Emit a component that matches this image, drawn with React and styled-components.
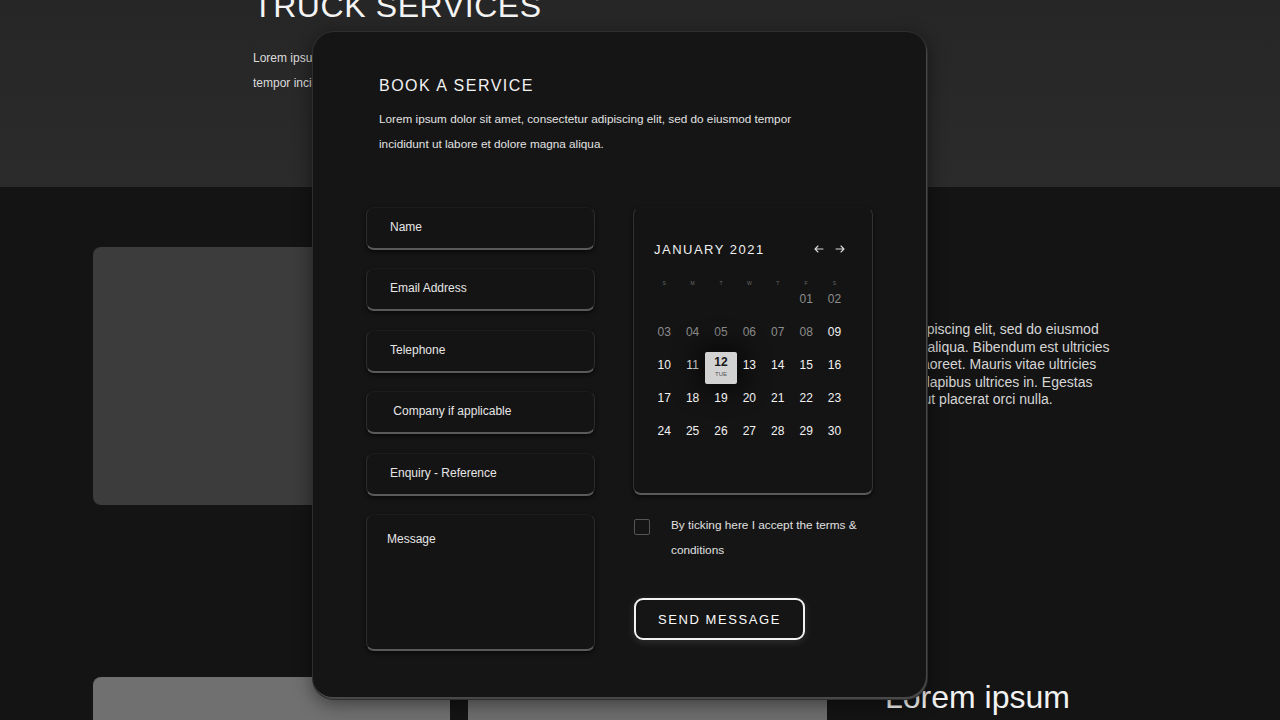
import React from "react"
import styled, { createGlobalStyle } from "styled-components"

const GlobalStyle = createGlobalStyle`
  html, body {
    margin: 0;
    padding: 0;
    background: #141414;
    font-family: "Liberation Sans", Arial, sans-serif;
    overflow: hidden;
  }
  * {
    box-sizing: border-box;
  }
`

const weekdays = ["S", "M", "T", "W", "T", "F", "S"]
const fields = ["Name", "Email Address", "Telephone", " Company if applicable", "Enquiry - Reference"]
const selected = 12

function Arrow({ flip }) {
  return (
    <svg width="10" height="8" viewBox="0 0 10 8" style={{ transform: flip ? "scaleX(-1)" : "none" }}>
      <path d="M9 4H1.2M4 1L1 4l3 3" fill="none" stroke="#d8d8d8" strokeWidth="1.1" strokeLinecap="round" strokeLinejoin="round" />
    </svg>
  )
}

function Calendar() {
  const cells = []
  for (let i = 0; i < 5; i++) cells.push(null)
  for (let d = 1; d <= 30; d++) cells.push(d)

  return (
    <CalendarCard>
      <CalendarHeader>
        <MonthTitle>JANUARY 2021</MonthTitle>
        <Arrows>
          <Arrow />
          <Arrow flip />
        </Arrows>
      </CalendarHeader>
      <WeekRow>
        {weekdays.map((w, i) => (
          <WeekLetter key={i}>{w}</WeekLetter>
        ))}
      </WeekRow>
      <DaysGrid>
        {cells.map((d, i) => (
          <DayCell key={i} $past={d !== null && d < 9}>
            {d === selected ? (
              <SelectedDay>
                <SelectedNumber>{d}</SelectedNumber>
                <SelectedLabel>TUE</SelectedLabel>
              </SelectedDay>
            ) : d === null ? (
              ""
            ) : (
              String(d).padStart(2, "0")
            )}
          </DayCell>
        ))}
      </DaysGrid>
    </CalendarCard>
  )
}

export default function App() {
  return (
    <Page>
      <GlobalStyle />
      <Hero>
        <HeroTitle>TRUCK SERVICES</HeroTitle>
        <HeroText>
          Lorem ipsum dolor sit amet, consectetur adipiscing elit, sed do eiusmod
          <br />
          tempor incididunt ut labore et dolore magna aliqua.
        </HeroText>
      </Hero>

      <Content>
        <Row>
          <Tile $tone="#3c3c3c" $width={357} $height={258} />
          <SideText>
            adipiscing elit, sed do eiusmod
            <br />
            na aliqua. Bibendum est ultricies
            <br />
            s laoreet. Mauris vitae ultricies
            <br />
            ci dapibus ultrices in. Egestas
            <br />
            m ut placerat orci nulla.
          </SideText>
        </Row>
        <BottomRow>
          <Tile $tone="#707070" $width={357} $height={200} />
          <Tile $tone="#6e6e6e" $width={359} $height={200} />
          <SideHeading>Lorem ipsum</SideHeading>
        </BottomRow>
      </Content>

      <Modal>
        <ModalHeader>
          <ModalTitle>BOOK A SERVICE</ModalTitle>
          <ModalText>
            Lorem ipsum dolor sit amet, consectetur adipiscing elit, sed do eiusmod tempor
            <br />
            incididunt ut labore et dolore magna aliqua.
          </ModalText>
        </ModalHeader>

        <Form>
          <FieldColumn>
            {fields.map((f) => (
              <Field key={f} placeholder={f} />
            ))}
            <MessageField placeholder="Message" />
          </FieldColumn>

          <SideColumn>
            <Calendar />
            <TermsRow>
              <CheckBox />
              <TermsText>
                By ticking here I accept the terms &amp;
                <br />
                conditions
              </TermsText>
            </TermsRow>
            <SendButton>SEND MESSAGE</SendButton>
          </SideColumn>
        </Form>
      </Modal>
    </Page>
  )
}

const Page = styled.div`
  position: relative;
  width: 1280px;
  height: 720px;
  overflow: hidden;
  background: #141414;
`
const Hero = styled.section`
  height: 187px;
  padding-left: 253px;
  background: linear-gradient(180deg, #262626 0%, #2b2b2b 100%);
  overflow: hidden;
`
const HeroTitle = styled.h1`
  margin: -10px 0 0;
  font-size: 32px;
  line-height: 1;
  font-weight: 400;
  color: #f4f4f4;
  letter-spacing: 0.6px;
`
const HeroText = styled.p`
  margin: 23.5px 0 0;
  font-size: 12px;
  line-height: 25px;
  color: #dcdcdc;
`
const Content = styled.section`
  padding: 60px 0 0 93px;
`
const Row = styled.div`
  display: flex;
  align-items: flex-start;
`
const BottomRow = styled.div`
  display: flex;
  align-items: flex-start;
  gap: 18px;
  margin-top: 172px;
`
const Tile = styled.div`
  flex: none;
  width: ${(p) => p.$width}px;
  height: ${(p) => p.$height}px;
  border-radius: 8px;
  background: ${(p) => p.$tone};
`
const SideText = styled.p`
  margin: 74px 0 0 458px;
  font-size: 14px;
  line-height: 17.5px;
  color: #d6d6d6;
  white-space: nowrap;
`
const SideHeading = styled.h2`
  margin: 4px 0 0 40px;
  font-size: 32px;
  line-height: 1;
  font-weight: 400;
  color: #f2f2f2;
`
const Modal = styled.div`
  position: absolute;
  top: 31px;
  left: 312px;
  width: 616px;
  height: 669px;
  padding: 44px 53px 0;
  border-radius: 22px;
  background: #151515;
  border: 1px solid rgba(255, 255, 255, 0.11);
  box-shadow: inset -1px -2px 0 rgba(255, 255, 255, 0.22), 0 4px 18px rgba(0, 0, 0, 0.45);
`
const ModalHeader = styled.div`
  padding-left: 13px;
`
const ModalTitle = styled.h2`
  margin: 0;
  font-size: 16px;
  line-height: 20px;
  font-weight: 400;
  letter-spacing: 1.5px;
  color: #f2f2f2;
`
const ModalText = styled.p`
  margin: 9.5px 0 0;
  font-size: 11.75px;
  line-height: 25px;
  color: #e2e2e2;
`
const Form = styled.form`
  display: grid;
  grid-template-columns: 229px 240px;
  column-gap: 38px;
  margin-top: 51.5px;
`
const FieldColumn = styled.div`
  display: flex;
  flex-direction: column;
  gap: 18.4px;
`
const fieldLook = `
  width: 100%;
  border-radius: 8px;
  background: #141414;
  border: 1px solid #2c2c2c;
  border-top-color: #1c1c1c;
  border-bottom: 2px solid #5a5a5a;
  box-shadow: 0 2px 4px rgba(0, 0, 0, 0.6);
  color: #e6e6e6;
  font-family: "Liberation Sans", Arial, sans-serif;
  font-size: 12px;
  outline: none;
  &::placeholder {
    color: #e6e6e6;
    opacity: 1;
  }
`
const Field = styled.input`
  ${fieldLook}
  height: 43px;
  padding: 0 0 2px 23px;
`
const MessageField = styled.textarea`
  ${fieldLook}
  height: 137px;
  padding: 17px 20px;
  resize: none;
`
const SideColumn = styled.div`
  display: flex;
  flex-direction: column;
  align-items: flex-start;
`
const CalendarCard = styled.div`
  width: 240px;
  height: 288px;
  padding: 34px 24px 0 16px;
  border-radius: 8px;
  background: #141414;
  border: 1px solid #323232;
  border-top-color: #161616;
  border-bottom: 2px solid #5a5a5a;
  box-shadow: 0 2px 4px rgba(0, 0, 0, 0.6);
`
const CalendarHeader = styled.div`
  display: flex;
  align-items: center;
  justify-content: space-between;
  height: 14px;
  padding: 0 3px 0 4px;
`
const MonthTitle = styled.div`
  font-size: 13px;
  letter-spacing: 1.5px;
  color: #f0f0f0;
`
const Arrows = styled.div`
  display: flex;
  gap: 11px;
`
const WeekRow = styled.div`
  display: grid;
  grid-template-columns: repeat(7, 28.4px);
  margin-top: 23px;
  height: 8px;
`
const WeekLetter = styled.div`
  font-size: 5px;
  line-height: 8px;
  text-align: center;
  color: #6a6a6a;
`
const DaysGrid = styled.div`
  display: grid;
  grid-template-columns: repeat(7, 28.4px);
  grid-auto-rows: 22px;
  row-gap: 11px;
  margin-top: 1px;
`
const DayCell = styled.div`
  position: relative;
  display: flex;
  align-items: center;
  justify-content: center;
  font-size: 12px;
  color: ${(p) => (p.$past ? "#8d8d8d" : "#f2f2f2")};
`
const SelectedDay = styled.div`
  position: absolute;
  top: -2px;
  left: 50%;
  transform: translateX(-50%);
  width: 32px;
  height: 32px;
  display: flex;
  flex-direction: column;
  align-items: center;
  padding-top: 3px;
  border-radius: 2px;
  background: #d2d2d2;
  box-shadow: 0 0 22px 8px rgba(0, 0, 0, 0.55);
`
const SelectedNumber = styled.span`
  font-size: 12px;
  line-height: 14px;
  font-weight: 700;
  color: #161616;
`
const SelectedLabel = styled.span`
  margin-top: 1px;
  font-size: 6px;
  line-height: 8px;
  color: #555;
`
const TermsRow = styled.div`
  display: flex;
  align-items: flex-start;
  gap: 21px;
  margin: 17.5px 0 0 1px;
`
const CheckBox = styled.span`
  flex: none;
  width: 16px;
  height: 16px;
  margin-top: 6.5px;
  border: 1.5px solid #555;
  border-radius: 2px;
`
const TermsText = styled.p`
  margin: 0;
  font-size: 11.8px;
  line-height: 25px;
  color: #e0e0e0;
`
const SendButton = styled.button`
  margin: 35.5px 0 0 1px;
  width: 171px;
  height: 42px;
  border: 2px solid #f2f2f2;
  border-radius: 9px;
  background: transparent;
  color: #fafafa;
  font-family: "Liberation Sans", Arial, sans-serif;
  font-size: 13px;
  letter-spacing: 1.6px;
  box-shadow: 0 2px 8px rgba(255, 255, 255, 0.12);
`
